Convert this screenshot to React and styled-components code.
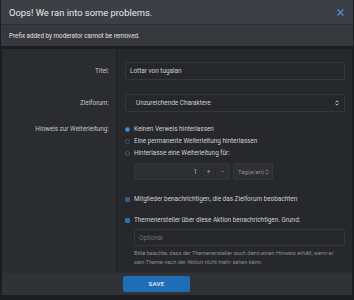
import React from "react";
import styled, { createGlobalStyle } from "styled-components";

const GlobalStyle = createGlobalStyle`
  html, body {
    margin: 0;
    padding: 0;
    background: #17181b;
  }
  body {
    font-family: Roboto, "Liberation Sans", Arial, sans-serif;
    width: 354px;
    height: 300px;
    overflow: hidden;
  }
`;

const Page = styled.div`
  width: 354px;
  height: 300px;
  display: flex;
  flex-direction: column;
  background: #1c1d20;
`;

const Overlay = styled.div`
  margin: 0 1px;
  background: #36383d;
  border-bottom: 1px solid #1a1b1e;
`;

const OverlayHead = styled.div`
  height: 24px;
  display: flex;
  align-items: center;
  justify-content: space-between;
  padding: 0 9px 0 8px;
  background: #3c3f45;
  border-bottom: 1px solid #2c2e32;
  color: #e9e9ea;
  font-size: 9.4px;
`;

const OverlayBody = styled.div`
  height: 21px;
  display: flex;
  align-items: center;
  padding: 0 8px;
  color: #e2e2e2;
  font-size: 6.3px;
`;

const Form = styled.div`
  margin: 2px 2px 0;
  display: flex;
  flex-direction: column;
  background: #26282c;
`;

const Row = styled.div`
  display: grid;
  grid-template-columns: 115px 1fr;
`;

const Label = styled.div`
  background: #2a2c30;
  border-right: 1px solid #1f2124;
  text-align: right;
  padding: ${(p) => p.$top}px 7px 0 0;
  color: #c4c5c7;
  font-size: 6.4px;
  line-height: 12px;
`;

const Cell = styled.div`
  padding: ${(p) => p.$pad};
  display: flex;
  flex-direction: column;
`;

const Input = styled.div`
  height: 18px;
  box-sizing: border-box;
  border: 1px solid #35373c;
  border-radius: 2px;
  background: #25272b;
  display: flex;
  align-items: center;
  justify-content: space-between;
  padding: 0 5px 0 ${(p) => p.$indent || 4}px;
  color: ${(p) => (p.$muted ? "#6f7175" : "#cfd0d2")};
  font-size: 6.4px;
`;

const Option = styled.div`
  display: flex;
  align-items: center;
  gap: 4px;
  height: 12px;
  color: #cfd0d2;
  font-size: 6.4px;
`;

const Radio = styled.span`
  width: 5px;
  height: 5px;
  border-radius: 50%;
  box-sizing: border-box;
  border: 1px solid ${(p) => (p.$on ? "#2c79c7" : "#3d5878")};
  background: ${(p) => (p.$on ? "#2c79c7" : "#25272b")};
  box-shadow: ${(p) => (p.$on ? "inset 0 0 0 1px #5a9ad8" : "none")};
  flex: none;
`;

const Check = styled.span`
  width: 5px;
  height: 5px;
  border-radius: 1px;
  background: ${(p) => (p.$strong ? "#2f70b2" : "#3a5c7e")};
  flex: none;
`;

const Nested = styled.div`
  margin: 4px 0 0 9px;
  display: flex;
  gap: 3px;
  height: 17px;
`;

const NumberBox = styled.div`
  width: 96px;
  display: flex;
  background: #2d2f33;
  border: 1px solid #34363b;
  border-radius: 2px;
  box-sizing: border-box;
  color: #b9babc;
  font-size: 6.4px;
`;

const NumberValue = styled.div`
  flex: 1;
  display: flex;
  align-items: center;
  justify-content: flex-end;
  padding-right: 4px;
`;

const Step = styled.div`
  width: 13px;
  display: flex;
  align-items: center;
  justify-content: center;
  border-left: 1px solid #26282c;
  color: #a9aaad;
`;

const UnitSelect = styled.div`
  width: 40px;
  box-sizing: border-box;
  background: #2d2f33;
  border: 1px solid #34363b;
  border-radius: 2px;
  display: flex;
  align-items: center;
  justify-content: space-between;
  padding: 0 3px 0 4px;
  color: #8e8f92;
  font-size: 6px;
`;

const Reason = styled(Input)`
  margin: 3px 0 0 9px;
  height: 17px;
`;

const Hint = styled.div`
  margin: 3px 0 0 9px;
  color: #8d8e91;
  font-size: 5.6px;
  line-height: 9px;
`;

const Footer = styled.div`
  height: 23px;
  margin: 0 2px;
  box-sizing: border-box;
  background: #303236;
  border-top: 1px solid #2b2d31;
  display: flex;
  align-items: center;
  padding-left: 121px;
`;

const SaveButton = styled.button`
  width: 67px;
  height: 16px;
  border: none;
  border-radius: 2px;
  background: #1f6cb7;
  color: #f1f4f8;
  font-family: inherit;
  font-size: 6.2px;
  font-weight: 500;
  letter-spacing: 0.2px;
  padding: 0;
`;

const CloseIcon = () => (
  <svg width="7" height="7" viewBox="0 0 7 7">
    <path d="M1 1L6 6M6 1L1 6" stroke="#4b8fd4" strokeWidth="1.4" strokeLinecap="round" />
  </svg>
);

const SelectArrows = ({ color = "#d8d8d8" }) => (
  <svg width="4" height="6" viewBox="0 0 4 6">
    <path d="M0.5 2.3L2 0.8L3.5 2.3M0.5 3.7L2 5.2L3.5 3.7" stroke={color} strokeWidth="0.9" fill="none" />
  </svg>
);

export default function App() {
  return (
    <>
      <GlobalStyle />
      <Page>
        <Overlay>
          <OverlayHead>
            <span>Oops! We ran into some problems.</span>
            <CloseIcon />
          </OverlayHead>
          <OverlayBody>Prefix added by moderator cannot be removed.</OverlayBody>
        </Overlay>

        <Form>
          <Row>
            <Label $top={16}>Titel:</Label>
            <Cell $pad="13px 7px 7px 8px">
              <Input>Lottar von tugalan</Input>
            </Cell>
          </Row>
          <Row>
            <Label $top={10}>Zielforum:</Label>
            <Cell $pad="7px 7px 7px 8px">
              <Input $indent={10}>
                Unzureichende Charaktere
                <SelectArrows />
              </Input>
            </Cell>
          </Row>
          <Row>
            <Label $top={4}>Hinweis zur Weiterleitung:</Label>
            <Cell $pad="4px 7px 8px 8px">
              <Option>
                <Radio $on />
                Keinen Verweis hinterlassen
              </Option>
              <Option>
                <Radio />
                Eine permanente Weiterleitung hinterlassen
              </Option>
              <Option>
                <Radio />
                Hinterlasse eine Weiterleitung für:
              </Option>
              <Nested>
                <NumberBox>
                  <NumberValue>1</NumberValue>
                  <Step>+</Step>
                  <Step>−</Step>
                </NumberBox>
                <UnitSelect>
                  Tag(e/en)
                  <SelectArrows color="#8e8f92" />
                </UnitSelect>
              </Nested>
            </Cell>
          </Row>
          <Row>
            <Label $top={0} />
            <Cell $pad="5px 7px 8px 8px">
              <Option>
                <Check />
                Mitglieder benachrichtigen, die das Zielforum beobachten
              </Option>
            </Cell>
          </Row>
          <Row>
            <Label $top={0} />
            <Cell $pad="1px 7px 5px 8px">
              <Option>
                <Check $strong />
                Themenersteller über diese Aktion benachrichtigen. Grund:
              </Option>
              <Reason $muted>Optional</Reason>
              <Hint>
                Bitte beachte, dass der Themenersteller auch dann einen Hinweis erhält, wenn er
                <br />
                sein Theme nach der Aktion nicht mehr sehen kann.
              </Hint>
            </Cell>
          </Row>
        </Form>

        <Footer>
          <SaveButton>SAVE</SaveButton>
        </Footer>
      </Page>
    </>
  );
}
